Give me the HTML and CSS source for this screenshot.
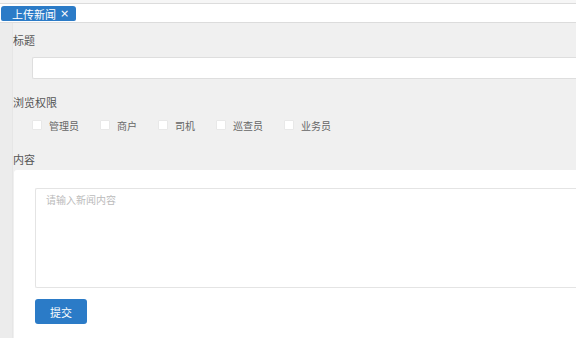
FILE: index.html
```html
<!DOCTYPE html>
<html lang="zh">
<head>
  <meta charset="UTF-8" />
  <title>上传新闻</title>
  <link rel="stylesheet" href="styles.css">
</head>
<body>
  <div class="topline"></div>
  <div class="tabbar">
    <span class="tab">上传新闻 <span class="tab-close">×</span></span>
  </div>
  <div class="page">
    <div class="main">
      <div class="field-label">标题</div>
      <input class="text-input" type="text" />

      <div class="field-label perm-label">浏览权限</div>
      <div class="check-row">
        <label class="check"><span class="box"></span>管理员</label>
        <label class="check"><span class="box"></span>商户</label>
        <label class="check"><span class="box"></span>司机</label>
        <label class="check"><span class="box"></span>巡查员</label>
        <label class="check"><span class="box"></span>业务员</label>
      </div>

      <div class="field-label content-label">内容</div>
      <div class="card">
        <textarea class="content-input" placeholder="请输入新闻内容"></textarea>
        <button class="submit-btn">提交</button>
      </div>
    </div>
  </div>
</body>
</html>
```

FILE: styles.css
```css
html, body {
  height: 100%;
}
body {
  margin: 0;
  font-family: "Noto Sans CJK SC", "Noto Sans", sans-serif;
  background: #f0f0f0;
  color: #555;
  overflow: hidden;
  display: flex;
  flex-direction: column;
}
.topline {
  height: 3px;
  background: #f6f6f6;
  border-bottom: 1px solid #dcdcdc;
}
.tabbar {
  height: 18px;
  background: #fff;
  border-bottom: 1px solid #dcdcdc;
  padding-left: 1px;
  display: flex;
  align-items: flex-end;
}
.tab {
  display: inline-flex;
  align-items: center;
  height: 15px;
  width: 75px;
  box-sizing: border-box;
  margin-bottom: 1px;
  padding-left: 11px;
  background: #2b7bc7;
  color: #fff;
  font-size: 11px;
  border-radius: 3px 3px 2px 2px;
  white-space: nowrap;
}
.tab-close {
  margin-left: 4px;
  font-family: "DejaVu Sans", sans-serif;
  font-size: 11px;
}
.page {
  flex: 1;
  display: flex;
  background: #ececec;
  padding-left: 12px;
  min-height: 0;
}
.main {
  flex: 1;
  border-left: 1px solid #e6e6e6;
  background: #f0f0f0;
  display: flex;
  flex-direction: column;
  min-width: 0;
  overflow: hidden;
}
.field-label {
  font-size: 11px;
  line-height: 14px;
  margin-top: 10px;
  color: #555;
}
.text-input {
  margin: 10px 0 0 19px;
  height: 22px;
  box-sizing: border-box;
  border: 1px solid #dedede;
  border-right: none;
  border-radius: 2px 0 0 2px;
  background: #fff;
  outline: none;
}
.perm-label {
  margin-top: 16px;
}
.check-row {
  display: flex;
  margin: 9px 0 0 19px;
  height: 14px;
  align-items: center;
}
.check {
  display: flex;
  align-items: center;
  font-size: 10px;
  color: #666;
  margin-right: 21px;
}
.box {
  width: 8px;
  height: 8px;
  background: #fff;
  border: 1px solid #e8e8e8;
  border-radius: 1px;
  margin-right: 7px;
}
.content-label {
  margin-top: 20px;
}
.card {
  flex: 1;
  margin: 4px 0 0 1px;
  background: #fff;
  border-radius: 3px 0 0 0;
  padding: 18px 0 0 21px;
  display: flex;
  flex-direction: column;
}
.content-input {
  height: 100px;
  box-sizing: border-box;
  border: 1px solid #e4e4e4;
  border-right: none;
  border-radius: 2px 0 0 2px;
  padding: 3px 10px;
  font-family: "Noto Sans CJK SC", "Noto Sans", sans-serif;
  font-size: 10px;
  resize: none;
  outline: none;
}
.content-input::placeholder {
  color: #bbb;
}
.submit-btn {
  align-self: flex-start;
  margin-top: 11px;
  width: 52px;
  height: 25px;
  background: #2b7bc7;
  color: #fff;
  border: none;
  border-radius: 3px;
  font-family: "Noto Sans CJK SC", "Noto Sans", sans-serif;
  font-size: 11px;
  cursor: pointer;
}
```
